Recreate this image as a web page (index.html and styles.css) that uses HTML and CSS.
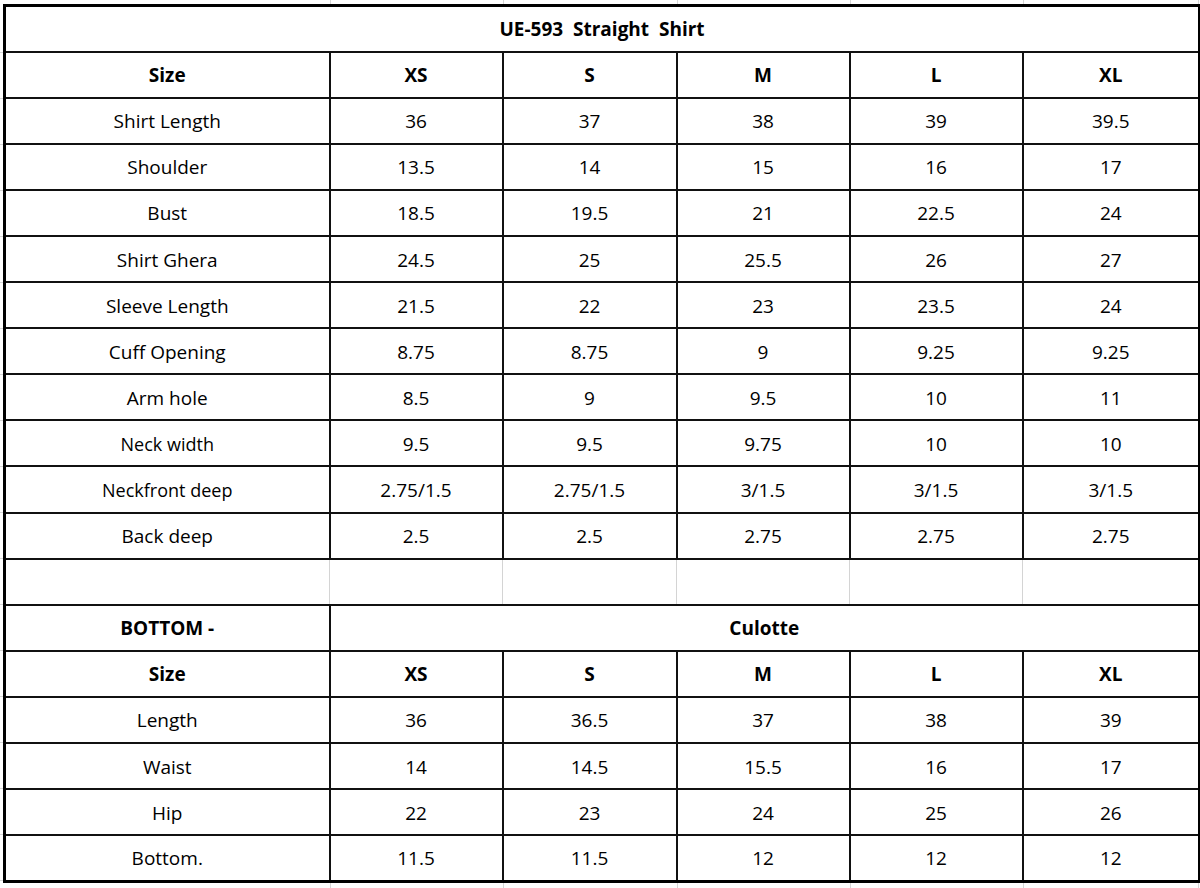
FILE: index.html
```html
<!DOCTYPE html>
<html>
<head>
<meta charset="utf-8">
<title>UE-593 Straight Shirt</title>
<link rel="stylesheet" href="styles.css">
</head>
<body>
<div class="sheet">
<table class="chart">
<colgroup>
<col class="c-label"><col class="c-a"><col class="c-b"><col class="c-a"><col class="c-a"><col class="c-last">
</colgroup>
<tbody>
<tr><td class="bold title" colspan="6">UE-593  Straight  Shirt</td></tr>
<tr class="bold"><td>Size</td><td>XS</td><td>S</td><td>M</td><td>L</td><td>XL</td></tr>
<tr><td>Shirt Length</td><td>36</td><td>37</td><td>38</td><td>39</td><td>39.5</td></tr>
<tr><td>Shoulder</td><td>13.5</td><td>14</td><td>15</td><td>16</td><td>17</td></tr>
<tr><td>Bust</td><td>18.5</td><td>19.5</td><td>21</td><td>22.5</td><td>24</td></tr>
<tr><td>Shirt Ghera</td><td>24.5</td><td>25</td><td>25.5</td><td>26</td><td>27</td></tr>
<tr><td>Sleeve Length</td><td>21.5</td><td>22</td><td>23</td><td>23.5</td><td>24</td></tr>
<tr><td>Cuff Opening</td><td>8.75</td><td>8.75</td><td>9</td><td>9.25</td><td>9.25</td></tr>
<tr><td>Arm hole</td><td>8.5</td><td>9</td><td>9.5</td><td>10</td><td>11</td></tr>
<tr><td class="small">Neck width</td><td>9.5</td><td>9.5</td><td>9.75</td><td>10</td><td>10</td></tr>
<tr><td class="small">Neckfront deep</td><td>2.75/1.5</td><td>2.75/1.5</td><td>3/1.5</td><td>3/1.5</td><td>3/1.5</td></tr>
<tr><td>Back deep</td><td>2.5</td><td>2.5</td><td>2.75</td><td>2.75</td><td>2.75</td></tr>
<tr class="blank"><td></td><td></td><td></td><td></td><td></td><td></td></tr>
<tr class="bold"><td>BOTTOM -</td><td colspan="5">Culotte</td></tr>
<tr class="bold"><td>Size</td><td>XS</td><td>S</td><td>M</td><td>L</td><td>XL</td></tr>
<tr><td>Length</td><td>36</td><td>36.5</td><td>37</td><td>38</td><td>39</td></tr>
<tr><td>Waist</td><td>14</td><td>14.5</td><td>15.5</td><td>16</td><td>17</td></tr>
<tr><td>Hip</td><td>22</td><td>23</td><td>24</td><td>25</td><td>26</td></tr>
<tr><td>Bottom.</td><td>11.5</td><td>11.5</td><td>12</td><td>12</td><td>12</td></tr>
</tbody>
</table>
</div>
</body>
</html>
```
FILE: styles.css
```css
html, body {
  margin: 0;
  padding: 0;
  background: #ffffff;
}

.sheet {
  width: 1200px;
  height: 888px;
  box-sizing: border-box;
  padding: 4px 2px 0 3px;
  overflow: hidden;
  background-color: #ffffff;
  background-image:
    linear-gradient(#d6d6d6, #d6d6d6),
    linear-gradient(#d6d6d6, #d6d6d6),
    linear-gradient(#d6d6d6, #d6d6d6),
    linear-gradient(#d6d6d6, #d6d6d6),
    linear-gradient(#d6d6d6, #d6d6d6),
    linear-gradient(#d6d6d6, #d6d6d6),
    repeating-linear-gradient(to bottom, transparent 0, transparent 45px, #d6d6d6 45px, #d6d6d6 46px);
  background-size: 1px 100%, 1px 100%, 1px 100%, 1px 100%, 1px 100%, 1px 100%, 100% 100%;
  background-position: 330px 0, 503px 0, 677px 0, 850px 0, 1023px 0, 1198px 0, 0 7px;
  background-repeat: no-repeat;
}

.chart {
  width: 1195px;
  table-layout: fixed;
  border-collapse: collapse;
  border: 3px solid #000000;
  background: #ffffff;
  font-family: "Open Sans", "Liberation Sans", sans-serif;
  font-size: 19px;
  color: #000000;
}

.c-label { width: 325px; }
.c-a { width: 173px; }
.c-b { width: 174px; }
.c-last { width: 177px; }

.chart tr {
  height: 46.1px;
}

.chart td {
  border: 2px solid #111111;
  text-align: center;
  vertical-align: middle;
  padding: 2px 0 0 0;
  line-height: 1;
  white-space: pre;
}

.bold td, td.bold {
  font-weight: 700;
}

.title {
  font-size: 19px;
}

td.small {
  font-size: 18px;
}

.blank td {
  border-left: 1px solid #d4d4d4;
  border-right: 1px solid #d4d4d4;
}
```
